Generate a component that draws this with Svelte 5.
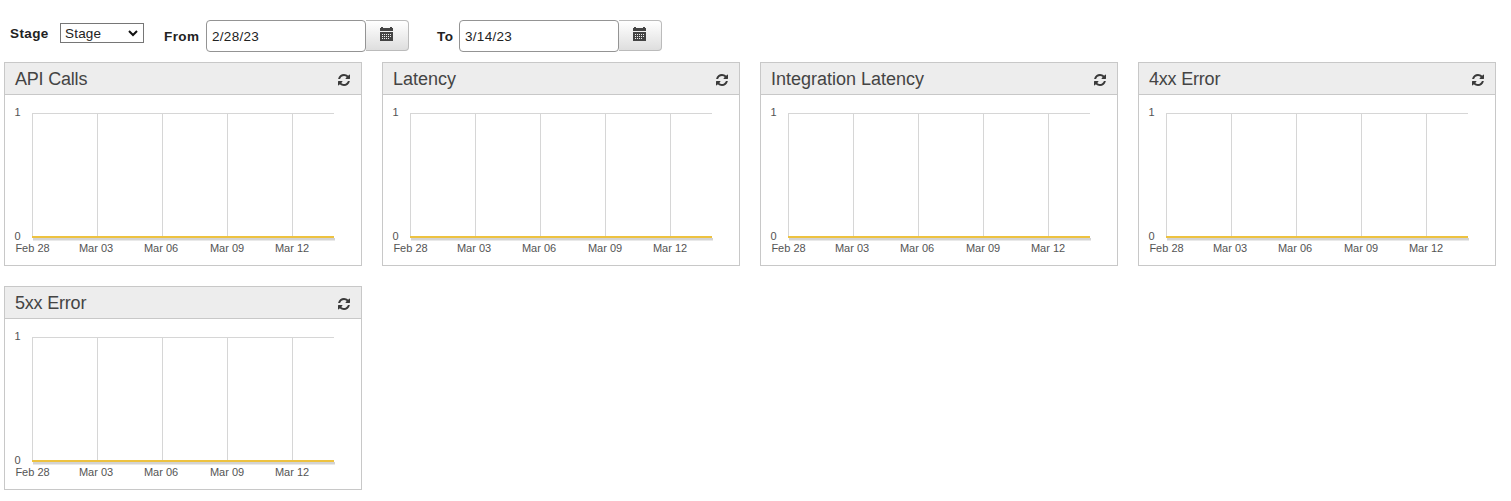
<script>
  const charts = ['API Calls', 'Latency', 'Integration Latency', '4xx Error', '5xx Error'];
  const ticks = [
    { x: 27.5, label: 'Feb 28' },
    { x: 92.5, label: 'Mar 03', dx: -1.5 },
    { x: 157.5, label: 'Mar 06', dx: -1.5 },
    { x: 222.5, label: 'Mar 09', dx: -0.5 },
    { x: 287.5, label: 'Mar 12', dx: -0.5 }
  ];
  const spacing = { 'API Calls': -0.2, '4xx Error': -0.2, '5xx Error': -0.2 };
</script>

{#snippet calendar()}
  <svg class="cal" width="13" height="14" viewBox="0 0 13 14" shape-rendering="crispEdges">
    <path fill="#444" d="M0 1h1V0h2v1h7V0h2v1h1v3H0zM0 5h13v9H0z" />
    {#each [7, 9, 11] as y}
      {#each [2, 4, 6, 8, 10] as x}
        {#if !(y === 11 && x === 10)}<rect {x} {y} width="1" height="1" fill="#eee" />{/if}
      {/each}
    {/each}
  </svg>
{/snippet}

<div class="filters">
  <b class="stage">Stage</b>
  <div class="select">
    <span>Stage</span>
    <svg width="10" height="7" viewBox="0 0 10 7"><path d="M1 1l4 4 4-4" fill="none" stroke="#111" stroke-width="2" /></svg>
  </div>
  <b class="from">From</b>
  <div class="date"><div class="input">2/28/23</div><div class="btn">{@render calendar()}</div></div>
  <b class="to">To</b>
  <div class="date"><div class="input">3/14/23</div><div class="btn">{@render calendar()}</div></div>
</div>

<div class="grid">
  {#each charts as title}
    <section class="card">
      <header>
        <span style="letter-spacing: {spacing[title] ?? 0}px">{title}</span>
        <svg width="12" height="12" viewBox="0 0 1536 1536">
          <path fill="#3a3a3a" d="M1511 928q0 5-1 7-64 268-268 434.500T764 1536q-146 0-282.500-55T238 1324l-129 129q-19 19-45 19t-45-19-19-45V960q0-26 19-45t45-19h448q26 0 45 19t19 45-19 45l-137 137q71 66 161 102t187 36q134 0 250-65t186-179q11-17 53-117 8-23 30-23h192q13 0 22.500 9.500t9.500 22.500zm25-800v448q0 26-19 45t-45 19h-448q-26 0-45-19t-19-45 19-45l138-138Q969 256 768 256q-134 0-250 65T332 500q-11 17-53 117-8 23-30 23H50q-13 0-22.500-9.500T18 608v-7q65-268 270-434.500T768 0q146 0 284 55.500T1297 212l130-129q19-19 45-19t45 19 19 45z" />
        </svg>
      </header>
      <svg class="chart" width="356" height="170" viewBox="0 0 356 170">
        <g stroke="#d6d6d6" stroke-width="1">
          <path d="M27 18.5H329" />
          {#each ticks as t}<path d="M{t.x} 18V142" />{/each}
        </g>
        <rect x="28" y="143" width="302" height="2" fill="#d3d3d3" />
        <rect x="28" y="145" width="302" height="1" fill="#e9e9e9" />
        <rect x="27" y="141" width="302" height="2" fill="#edc240" />
        <text x="15.500" y="21" text-anchor="end">1</text>
        <text x="15.500" y="145" text-anchor="end">0</text>
        {#each ticks as t}<text x={t.x + (t.dx ?? 0)} y="157" text-anchor="middle">{t.label}</text>{/each}
      </svg>
    </section>
  {/each}
</div>

<style>
  :global(body) {
    margin: 0;
    background: #fff;
    font-family: 'Liberation Sans', Arial, sans-serif;
    color: #222;
  }
  .filters {
    height: 62px;
    box-sizing: border-box;
    padding: 20px 0 0 10px;
    display: flex;
    align-items: flex-start;
    font-size: 13px;
    line-height: 16px;
  }
  b { font-size: 13.500px; letter-spacing: 0.4px; }
  .stage { width: 50px; padding-top: 6px; }
  .from { width: 42px; padding-top: 9px; margin-left: 20px; }
  .to { width: 22px; padding-top: 9px; margin-left: 28px; }
  .select {
    width: 84px;
    height: 20px;
    box-sizing: border-box;
    margin-top: 3px;
    border: 1px solid #767676;
    padding: 1px 5px 0 4px;
    display: flex;
    align-items: center;
    justify-content: space-between;
    font-size: 13.500px;
    letter-spacing: 0.2px;
  }
  .select svg { margin-bottom: 1px; }
  .date { display: flex; }
  .input {
    width: 160px;
    height: 32px;
    box-sizing: border-box;
    border: 1px solid #949494;
    border-radius: 4px;
    padding: 8px 5px;
    background: #fff;
    font-size: 13.500px;
    letter-spacing: 0.3px;
  }
  .btn {
    width: 43px;
    height: 31px;
    box-sizing: border-box;
    border: 1px solid #bbb;
    border-left: 0;
    border-radius: 0 4px 4px 0;
    background: linear-gradient(#fff, #dedede);
    padding: 6px 0 0 14px;
  }
  .cal { display: block; }
  .grid {
    display: grid;
    grid-template-columns: repeat(4, 358px);
    gap: 20px;
    padding-left: 4px;
  }
  .card {
    height: 204px;
    box-sizing: border-box;
    border: 1px solid #c8c8c8;
  }
  header {
    height: 32px;
    box-sizing: border-box;
    border-bottom: 1px solid #c8c8c8;
    background: #ededed;
    padding: 0 11px 0 10px;
    display: flex;
    align-items: center;
    justify-content: space-between;
    font-size: 18px;
    line-height: 29px;
    color: #444;
  }
  header span { padding-top: 2px; }
  header svg { margin-top: 2px; }
  .chart { display: block; }
  text { font-size: 11px; fill: #545454; }
</style>
